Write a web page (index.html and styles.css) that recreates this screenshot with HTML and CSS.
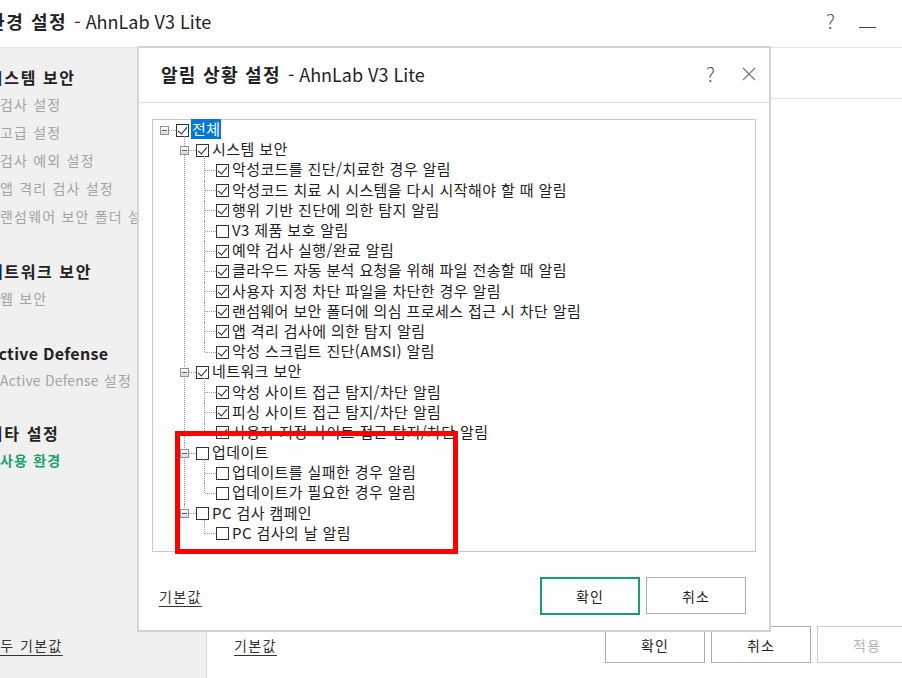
FILE: index.html
```html
<!DOCTYPE html>
<html lang="ko">
<head>
  <meta charset="UTF-8" />
  <title>환경 설정 - AhnLab V3 Lite</title>
  <link rel="stylesheet" href="styles.css">
</head>
<body>
  <div class="app">
    <div class="titlebar">
      <div class="app-title"><b>환경 설정</b> - AhnLab V3 Lite</div>
      <div class="win-ctrl">
        <span class="help">?</span>
        <span class="min"></span>
      </div>
    </div>

    <div class="app-body">
      <aside class="sidebar">
        <div class="group">
          <div class="group-title">시스템 보안</div>
          <div class="item">검사 설정</div>
          <div class="item">고급 설정</div>
          <div class="item">검사 예외 설정</div>
          <div class="item">앱 격리 검사 설정</div>
          <div class="item">랜섬웨어 보안 폴더 설정</div>
        </div>
        <div class="group">
          <div class="group-title">네트워크 보안</div>
          <div class="item">웹 보안</div>
        </div>
        <div class="group">
          <div class="group-title en">Active Defense</div>
          <div class="item"><span class="en">Active Defense</span> 설정</div>
        </div>
        <div class="group last">
          <div class="group-title">기타 설정</div>
          <div class="item active">사용 환경</div>
        </div>
        <div class="side-foot"><a class="link">모두 기본값</a></div>
      </aside>

      <main class="content">
        <div class="content-head"></div>
        <div class="content-foot">
          <a class="link">기본값</a>
          <div class="buttons">
            <button class="btn">확인</button>
            <button class="btn">취소</button>
            <button class="btn disabled">적용</button>
          </div>
        </div>
      </main>
    </div>
  </div>

  <!-- 알림 상황 설정 dialog -->
  <div class="dialog">
    <div class="dlg-head">
      <div class="dlg-title"><b>알림 상황 설정</b> - AhnLab V3 Lite</div>
      <div class="dlg-ctrl">
        <span class="help">?</span>
        <svg class="close" width="14" height="14" viewBox="0 0 14 14">
          <path d="M1 1L13 13M13 1L1 13" stroke="#777" stroke-width="1.2" fill="none"/>
        </svg>
      </div>
    </div>

    <div class="tree-box">
      <ul class="tree">
        <li>
          <div class="row"><span class="exp"></span><span class="dash"></span><span class="chk on"></span><span class="lbl sel">전체</span></div>
          <ul>
            <li>
              <div class="row"><span class="exp"></span><span class="dash"></span><span class="chk on"></span><span class="lbl">시스템 보안</span></div>
              <ul>
                <li><div class="row"><span class="pad"></span><span class="dash long"></span><span class="chk on"></span><span class="lbl">악성코드를 진단/치료한 경우 알림</span></div></li>
                <li><div class="row"><span class="pad"></span><span class="dash long"></span><span class="chk on"></span><span class="lbl">악성코드 치료 시 시스템을 다시 시작해야 할 때 알림</span></div></li>
                <li><div class="row"><span class="pad"></span><span class="dash long"></span><span class="chk on"></span><span class="lbl">행위 기반 진단에 의한 탐지 알림</span></div></li>
                <li><div class="row"><span class="pad"></span><span class="dash long"></span><span class="chk"></span><span class="lbl">V3 제품 보호 알림</span></div></li>
                <li><div class="row"><span class="pad"></span><span class="dash long"></span><span class="chk on"></span><span class="lbl">예약 검사 실행/완료 알림</span></div></li>
                <li><div class="row"><span class="pad"></span><span class="dash long"></span><span class="chk on"></span><span class="lbl">클라우드 자동 분석 요청을 위해 파일 전송할 때 알림</span></div></li>
                <li><div class="row"><span class="pad"></span><span class="dash long"></span><span class="chk on"></span><span class="lbl">사용자 지정 차단 파일을 차단한 경우 알림</span></div></li>
                <li><div class="row"><span class="pad"></span><span class="dash long"></span><span class="chk on"></span><span class="lbl">랜섬웨어 보안 폴더에 의심 프로세스 접근 시 차단 알림</span></div></li>
                <li><div class="row"><span class="pad"></span><span class="dash long"></span><span class="chk on"></span><span class="lbl">앱 격리 검사에 의한 탐지 알림</span></div></li>
                <li><div class="row"><span class="pad"></span><span class="dash long"></span><span class="chk on"></span><span class="lbl">악성 스크립트 진단(AMSI) 알림</span></div></li>
              </ul>
            </li>
            <li>
              <div class="row"><span class="exp"></span><span class="dash"></span><span class="chk on"></span><span class="lbl">네트워크 보안</span></div>
              <ul>
                <li><div class="row"><span class="pad"></span><span class="dash long"></span><span class="chk on"></span><span class="lbl">악성 사이트 접근 탐지/차단 알림</span></div></li>
                <li><div class="row"><span class="pad"></span><span class="dash long"></span><span class="chk on"></span><span class="lbl">피싱 사이트 접근 탐지/차단 알림</span></div></li>
                <li><div class="row"><span class="pad"></span><span class="dash long"></span><span class="chk on"></span><span class="lbl">사용자 지정 사이트 접근 탐지/차단 알림</span></div></li>
              </ul>
            </li>
            <li>
              <div class="row"><span class="exp"></span><span class="dash"></span><span class="chk"></span><span class="lbl">업데이트</span></div>
              <ul>
                <li><div class="row"><span class="pad"></span><span class="dash long"></span><span class="chk"></span><span class="lbl">업데이트를 실패한 경우 알림</span></div></li>
                <li><div class="row"><span class="pad"></span><span class="dash long"></span><span class="chk"></span><span class="lbl">업데이트가 필요한 경우 알림</span></div></li>
              </ul>
            </li>
            <li>
              <div class="row"><span class="exp"></span><span class="dash"></span><span class="chk"></span><span class="lbl">PC 검사 캠페인</span></div>
              <ul>
                <li><div class="row"><span class="pad"></span><span class="dash long"></span><span class="chk"></span><span class="lbl">PC 검사의 날 알림</span></div></li>
              </ul>
            </li>
          </ul>
        </li>
      </ul>
    </div>

    <div class="dlg-foot">
      <a class="link">기본값</a>
      <div class="buttons">
        <button class="btn primary">확인</button>
        <button class="btn">취소</button>
      </div>
    </div>
  </div>

  <div class="mark-box"></div>
</body>
</html>
```

FILE: styles.css
```css
* {
  box-sizing: border-box;
  margin: 0;
  padding: 0;
}
body {
  width: 902px;
  height: 678px;
  overflow: hidden;
  position: relative;
  background-color: #ffffff;
  font-family: "Noto Sans CJK KR", "Noto Sans", sans-serif;
  color: #222;
}
.en {
  letter-spacing: 0;
}
.link {
  font-size: 14px;
  letter-spacing: 1.4px;
  color: #333;
  text-decoration: underline;
  text-underline-offset: 4px;
}
.btn {
  width: 100px;
  height: 37px;
  border: 1px solid #adadad;
  background-color: #fff;
  font-family: inherit;
  font-size: 14px;
  letter-spacing: 1px;
  color: #222;
}
.btn.disabled {
  color: #b4b4b4;
  border-color: #cfcfcf;
}
.btn.primary {
  height: 38px;
  border: 2px solid #14a16b;
}
.buttons {
  display: flex;
  gap: 6px;
}

/* Main window */
.app {
  width: 960px;
  height: 678px;
  margin-left: -24px;
  display: flex;
  flex-direction: column;
}
.titlebar {
  height: 48px;
  border-bottom: 1px solid #e2e2e2;
  display: flex;
  align-items: center;
  justify-content: space-between;
  padding-left: 12px;
  padding-bottom: 6px;
}
.app-title {
  font-size: 18px;
  color: #222;
}
.app-title b {
  letter-spacing: 1.6px;
  margin-right: 2px;
}
.win-ctrl {
  display: flex;
  align-items: center;
  width: 110px;
}
.win-ctrl .help {
  font-size: 20px;
  color: #555;
  font-weight: 300;
  margin-right: 24px;
}
.win-ctrl .min {
  width: 17px;
  height: 1px;
  background-color: #444;
  margin-top: 14px;
}
.app-body {
  flex: 1;
  display: flex;
}
.sidebar {
  width: 231px;
  background-color: #f0f0f0;
  border-right: 1px solid #dadada;
  padding: 16px 0 15px 24px;
  display: flex;
  flex-direction: column;
}
.group + .group {
  margin-top: 28px;
}
.group.last {
  margin-top: 26px;
}
.group-title {
  font-size: 16px;
  font-weight: bold;
  line-height: 26px;
  letter-spacing: 1.6px;
  text-indent: -12px;
  color: #222;
  white-space: nowrap;
}
.group-title.en {
  letter-spacing: 0.3px;
}
.item {
  font-size: 14px;
  line-height: 28px;
  letter-spacing: 1.2px;
  color: #a3a3a3;
  white-space: nowrap;
}
.item .en {
  letter-spacing: 0.2px;
}
.item.active {
  color: #17a36b;
  font-weight: bold;
}
.side-foot {
  margin-top: auto;
  height: 37px;
  display: flex;
  align-items: center;
  margin-left: -14px;
}
.content {
  flex: 1;
  display: flex;
  flex-direction: column;
  justify-content: space-between;
}
.content-head {
  height: 51px;
  border-bottom: 1px solid #e2e2e2;
}
.content-foot {
  display: flex;
  align-items: center;
  justify-content: space-between;
  padding: 0 19px 15px 27px;
}

/* Dialog */
.dialog {
  position: absolute;
  left: 137px;
  top: 46px;
  width: 634px;
  height: 586px;
  border: 2px solid #d3d3d3;
  background-color: #fff;
  display: flex;
  flex-direction: column;
}
.dlg-head {
  height: 55px;
  border-bottom: 1px solid #dcdcdc;
  display: flex;
  align-items: center;
  justify-content: space-between;
  padding: 0 13px 3px 22px;
}
.dlg-title {
  font-size: 18px;
  color: #222;
}
.dlg-title b {
  letter-spacing: 1.3px;
  margin-right: 2px;
}
.dlg-ctrl {
  display: flex;
  align-items: center;
  gap: 27px;
}
.dlg-ctrl .help {
  font-size: 20px;
  font-weight: 300;
  color: #555;
}
.tree-box {
  margin: 16px 13px 0 13px;
  height: 433px;
  border: 1px solid #c9c9c9;
}
.dlg-foot {
  flex: 1;
  display: flex;
  align-items: center;
  justify-content: space-between;
  padding: 10px 23px 0 20px;
}

/* Tree */
.tree,
.tree ul {
  list-style: none;
}
.tree {
  padding-left: 7px;
}
.tree ul {
  padding-left: 20px;
}
.tree ul > li {
  position: relative;
}
.tree ul > li::before {
  content: '';
  position: absolute;
  left: 4px;
  top: 0;
  bottom: 0;
  border-left: 1px dotted #9c9c9c;
}
.tree ul > li:first-child::before {
  top: -4px;
}
.tree ul > li:last-child::before {
  bottom: auto;
  height: 10px;
}
.tree ul > li:first-child:last-child::before {
  height: 14px;
}
.row {
  height: 20.2px;
  display: flex;
  align-items: center;
}
.exp {
  flex: none;
  width: 9px;
  height: 9px;
  border: 1px solid #919191;
  background: linear-gradient(#ffffff, #dadada);
  position: relative;
  z-index: 1;
}
.exp::after {
  content: '';
  position: absolute;
  left: 1px;
  top: 3px;
  width: 5px;
  height: 1px;
  background-color: #4b5d80;
}
.pad {
  flex: none;
  width: 5px;
}
.dash {
  flex: none;
  width: 7px;
  border-top: 1px dotted #9c9c9c;
}
.dash.long {
  width: 11px;
}
.chk {
  flex: none;
  width: 13px;
  height: 13px;
  border: 1px solid #333;
  background-color: #fff;
  position: relative;
}
.chk.on::after {
  content: '';
  position: absolute;
  left: 3px;
  top: 0px;
  width: 4px;
  height: 8px;
  border: solid #222;
  border-width: 0 1.3px 1.3px 0;
  transform: rotate(40deg);
}
.lbl {
  margin-left: 2px;
  padding: 0 1px;
  font-size: 15px;
  line-height: 20px;
  letter-spacing: 0.4px;
  color: #1e1e1e;
  white-space: nowrap;
  position: relative;
  top: -1px;
}
.lbl.sel {
  background-color: #0078d7;
  color: #fff;
}

/* red highlight over the tree */
.mark-box {
  position: absolute;
  left: 175px;
  top: 431px;
  width: 283px;
  height: 123px;
  border: 5px solid #ff0000;
}
```
